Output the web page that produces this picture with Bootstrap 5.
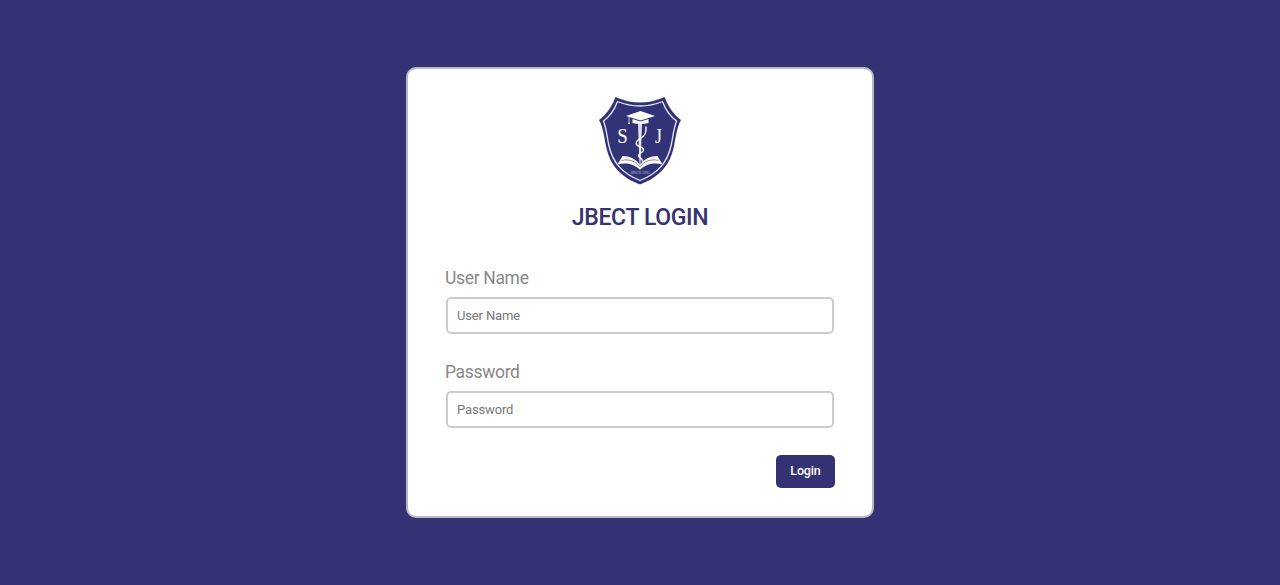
<!DOCTYPE html>
<html lang="en">
<head>
<meta charset="utf-8">
<meta name="viewport" content="width=device-width, initial-scale=1">
<title>JBECT Login</title>
<link href="https://cdn.jsdelivr.net/npm/bootstrap@5.3.0/dist/css/bootstrap.min.css" rel="stylesheet">
<style>
body { background: #343272; font-family: Roboto, "Liberation Sans", sans-serif; }
.login-card { width: 468px; height: 451px; border: 2px solid #b9b9c4; border-radius: 10px; padding: 27px 37px 0; }
.crest { width: 84px; height: 90px; }
.login-title { color: #343272; font-size: 23px; font-weight: 500; line-height: 28px; letter-spacing: -.35px; margin: 18px 0 34px; }
.field-label { color: #888; font-size: 17.5px; line-height: 24px; letter-spacing: -.33px; margin: 0 0 7px; }
.login-field { height: 37px; margin-left: 1px; width: 388px; border: 2px solid #ccc; border-radius: 5px; padding: 0 9px; font-size: 13px; letter-spacing: -.14px; }
.login-field::placeholder { color: #777; opacity: 1; }
.field-group { margin-bottom: 26px; }
.login-btn { width: 59px; height: 33px; padding: 0; border: 0; border-radius: 5px; background: #343272; color: #fff; font-size: 12.5px; font-weight: 500; letter-spacing: -.15px; margin-top: 1px; }
.login-btn:hover { background: #27255c; color: #fff; }
</style>
</head>
<body>
<main class="min-vh-100 d-flex justify-content-center align-items-center">
  <div class="card login-card bg-white">
    <svg class="crest mx-auto d-block flex-shrink-0" viewBox="0 0 84 90" role="img" aria-label="SJ crest">
      <path d="M17.500 1 Q42 12 66.500 1 Q72 16 83 24 C79 31 78 40 76 50 C72 70 61 81 42 88.500 C23 81 12 70 8 50 C6 40 5 31 1 24 Q12 16 17.500 1Z" fill="#323377"/>
      <path d="M19.500 5.500 Q42 14.500 64.500 5.500 Q69 18 78.500 25 C75.500 33 75 41 73 50 C69 67 60 77 42 84.500 C24 77 15 67 11 50 C9 41 8.500 33 5.500 25 Q15 18 19.500 5.500Z" fill="none" stroke="#e8e8f4" stroke-width="1.300"/>
      <path d="M28 20 L42.500 15 L57 20 L42.500 24.500Z" fill="#fff"/>
      <path d="M34.500 23 L42.500 25.500 L50.500 23 V27 Q42.500 29 34.500 27Z" fill="#fff"/>
      <path d="M31 21 V25" stroke="#fff" stroke-width=".7"/>
      <path d="M31 24.500 L32 28 H30Z" fill="#fff"/>
      <path d="M40 28 H44 L42.500 69 H41.500Z" fill="#e0e0ed"/>
      <path d="M48 31 C48.500 37 47 39.500 43 42 C38 44.500 37.500 47 39 49 C41 51 45.500 51 45.500 54 C45 57 40.500 57 40.500 60 C41 62 44 61.500 44.500 65" fill="none" stroke="#fff" stroke-width="1.400" stroke-linecap="round"/>
      <path d="M19.500 68.500 L24.500 60 C32 60 38 63 42 69 C46 63 52 60 59.500 60 L64.500 68.500 C55 66 47 68.500 42 74 C37 68.500 29 66 19.500 68.500Z" fill="#fff"/>
      <path d="M23.500 64.500 C31 62.500 38 65.500 42 71 C46 65.500 53 62.500 60.500 64.500" fill="none" stroke="#5b5994" stroke-width=".7"/>
      <g fill="#fff" text-anchor="middle" font-family="'Liberation Serif',serif">
        <text x="24.500" y="47" font-size="21" textLength="10.500" lengthAdjust="spacingAndGlyphs">S</text>
        <text x="60.500" y="47" font-size="21" textLength="7" lengthAdjust="spacingAndGlyphs">J</text>
        <text x="42" y="77.500" font-size="4" fill="#b9b8d5" textLength="19">SINCE 1993</text>
      </g>
    </svg>
    <h1 class="login-title text-center">JBECT LOGIN</h1>
    <form onsubmit="return false">
      <div class="field-group">
        <label class="field-label d-block" for="user">User Name</label>
        <input class="form-control login-field" id="user" type="text" placeholder="User Name">
      </div>
      <div class="field-group">
        <label class="field-label d-block" for="pass">Password</label>
        <input class="form-control login-field" id="pass" type="password" placeholder="Password">
      </div>
      <div class="d-flex justify-content-end"><button class="btn login-btn" type="submit">Login</button></div>
    </form>
  </div>
</main>
<script src="https://cdn.jsdelivr.net/npm/bootstrap@5.3.0/dist/js/bootstrap.bundle.min.js"></script>
</body>
</html>
